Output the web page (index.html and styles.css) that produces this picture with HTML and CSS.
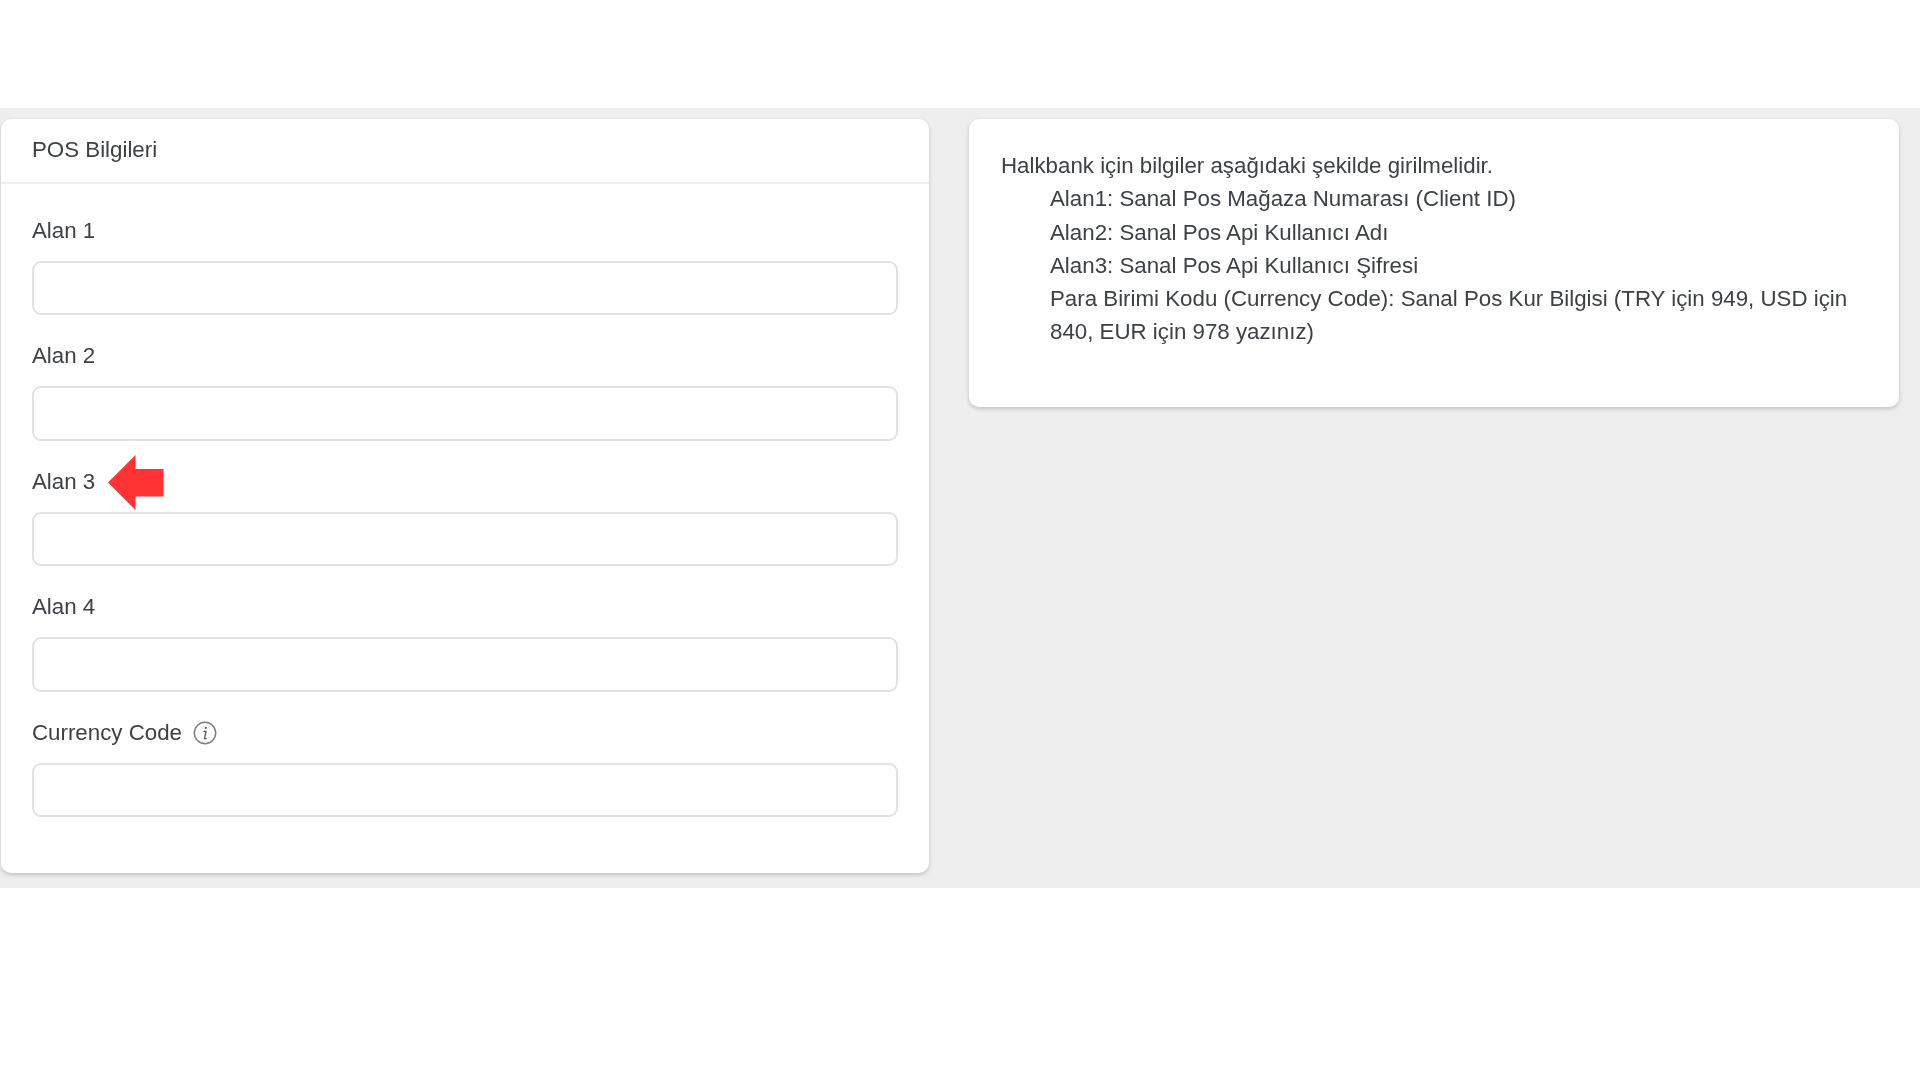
FILE: index.html
```
<!DOCTYPE html>
<html lang="tr">
<head>
<meta charset="utf-8">
<title>POS Bilgileri</title>
<link rel="stylesheet" href="styles.css">
</head>
<body>
<main class="band">
  <section class="card form-card">
    <header class="card-head">POS Bilgileri</header>
    <form class="card-body">
      <div class="field">
        <label class="label">Alan 1</label>
        <input class="input" type="text">
      </div>
      <div class="field">
        <label class="label">Alan 2</label>
        <input class="input" type="text">
      </div>
      <div class="field">
        <label class="label">Alan 3
          <svg class="arrow" width="56" height="56" viewBox="0 0 56 56"><polygon points="0,27.5 27.5,0 27.5,14 55.5,14 55.5,41.5 27.5,41.5 27.5,55" fill="#ff3333"/></svg>
        </label>
        <input class="input" type="text">
      </div>
      <div class="field">
        <label class="label">Alan 4</label>
        <input class="input" type="text">
      </div>
      <div class="field">
        <label class="label">Currency Code
          <svg class="info" width="24" height="24" viewBox="0 0 24 24"><circle cx="12" cy="12" r="10.7" fill="none" stroke="#7d8082" stroke-width="1.5"/><circle cx="12.8" cy="6.9" r="1.1" fill="#55585c"/><path d="M10.4 10.4h2.6l-1.5 7.2h2.2" fill="none" stroke="#55585c" stroke-width="1.3"/></svg>
        </label>
        <input class="input" type="text">
      </div>
    </form>
  </section>
  <section class="card info-card">
    <p class="line">Halkbank için bilgiler aşağıdaki şekilde girilmelidir.</p>
    <p class="line indent">Alan1: Sanal Pos Mağaza Numarası (Client ID)</p>
    <p class="line indent">Alan2: Sanal Pos Api Kullanıcı Adı</p>
    <p class="line indent">Alan3: Sanal Pos Api Kullanıcı Şifresi</p>
    <p class="line indent">Para Birimi Kodu (Currency Code): Sanal Pos Kur Bilgisi (TRY için 949, USD için 840, EUR için 978 yazınız)</p>
  </section>
</main>
</body>
</html>
```
FILE: styles.css
```
* { box-sizing: border-box; }
html, body { margin: 0; padding: 0; background: #fff; }
body {
  padding-top: 108px;
  font-family: "Liberation Sans", Arial, sans-serif;
  font-size: 22.3px;
  color: #3d4045;
}
.band {
  display: grid;
  grid-template-columns: 928px 930px;
  column-gap: 40px;
  align-items: start;
  height: 780px;
  padding: 11px 21px 0 1px;
  background: #eeeeee;
  filter: blur(0.4px);
}
.card {
  background: #fff;
  border-radius: 10px;
  box-shadow: 0 2px 4px rgba(0, 0, 0, 0.18);
}
.form-card { height: 754px; }
.card-head {
  height: 65px;
  padding: 16px 31px 0;
  line-height: 30px;
  border-bottom: 2px solid #efefef;
}
.card-body { padding: 30px 31px 0; }
.field { height: 125.4px; }
.label {
  display: flex;
  align-items: center;
  height: 30px;
  margin-bottom: 17px;
  padding-top: 4px;
  line-height: 30px;
}
.arrow { position: absolute; margin-left: 76px; margin-top: 2px; }
.info { margin-left: 11px; }
.input {
  display: block;
  width: 866px;
  height: 54.4px;
  border: 2px solid #e2e2e2;
  border-radius: 9px;
  background: #fff;
}
.info-card {
  height: 288px;
  padding: 30px 32px 0;
}
.line {
  margin: 0;
  line-height: 33.3px;
}
.indent { padding-left: 49px; }
```
